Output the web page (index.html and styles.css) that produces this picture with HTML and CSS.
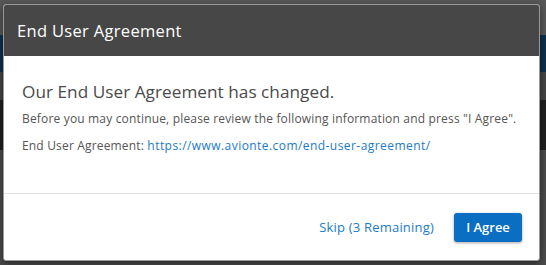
FILE: index.html
```html
<!DOCTYPE html>
<html>
<head>
<meta charset="utf-8">
<link rel="stylesheet" href="styles.css">
</head>
<body>
<div class="backdrop">
  <div class="band band-top"></div>
  <div class="band band-nav"></div>
  <div class="band band-mid"></div>
  <div class="band band-dark"></div>
  <div class="band band-rest"></div>
</div>
<div class="modal">
  <div class="modal-header">End User Agreement</div>
  <div class="modal-body">
    <h2 class="lead">Our End User Agreement has changed.</h2>
    <p class="note">Before you may continue, please review the following information and press "I Agree".</p>
    <p class="note">End User Agreement: <a class="link" href="#">https://www.avionte.com/end-user-agreement/</a></p>
  </div>
  <div class="modal-footer">
    <a class="skip" href="#">Skip (3 Remaining)</a>
    <button class="agree">I Agree</button>
  </div>
</div>
</body>
</html>
```

FILE: styles.css
```css
html, body {
  margin: 0;
  padding: 0;
}
body {
  width: 546px;
  height: 265px;
  overflow: hidden;
  position: relative;
  font-family: "Open Sans", "Noto Sans", sans-serif;
  background: #4a4a4a;
}
.backdrop {
  display: flex;
  flex-direction: column;
  height: 265px;
}
.band-top { height: 35px; background: #575757; }
.band-nav { height: 37px; background: #0c2f4c; }
.band-mid { height: 28px; background: #444444; }
.band-dark { height: 50px; background: #1f1f1f; }
.band-rest { flex: 1; background: #4a4a4a; }
.modal {
  position: absolute;
  left: 3px;
  top: 4px;
  width: 535px;
  height: 255px;
  background: #fff;
  border: 1px solid #9a9a9a;
  border-radius: 3px;
  overflow: hidden;
  box-shadow: 0 2px 6px rgba(0,0,0,0.5);
  display: flex;
  flex-direction: column;
}
.modal-header {
  height: 51px;
  box-sizing: border-box;
  background: #474747;
  color: #fff;
  font-size: 16.5px;
  font-weight: 500;
  padding: 14px 0 0 13px;
  letter-spacing: 0.32px;
}
.modal-body {
  padding: 24px 18px 0 18px;
  height: 138px;
  box-sizing: border-box;
  border-bottom: 1px solid #e2e2e2;
}
.lead {
  margin: 0;
  font-size: 17.2px;
  font-weight: 400;
  color: #4a4a4a;
  line-height: 24px;
  letter-spacing: 0.03px;
}
.note {
  margin: 7px 0 0 0;
  font-size: 12px;
  color: #555;
  line-height: 16px;
  letter-spacing: 0.17px;
}
.note + .note { margin-top: 11px; }
.link {
  color: #1a7bc9;
  text-decoration: none;
  letter-spacing: 0.44px;
}
.modal-footer {
  flex: 1;
  display: flex;
  align-items: center;
  justify-content: flex-end;
  gap: 20px;
  padding: 0 17px 0 0;
}
.skip {
  color: #1a7bc9;
  font-size: 13px;
  text-decoration: none;
  letter-spacing: 0.2px;
}
.agree {
  height: 29px;
  width: 68px;
  border: none;
  border-radius: 3px;
  background: #0a6ec3;
  color: #fff;
  font-family: "Open Sans", "Noto Sans", sans-serif;
  font-size: 13px;
  font-weight: 600;
  box-shadow: 0 1px 3px rgba(0,0,0,0.35);
  padding: 0;
}
```
